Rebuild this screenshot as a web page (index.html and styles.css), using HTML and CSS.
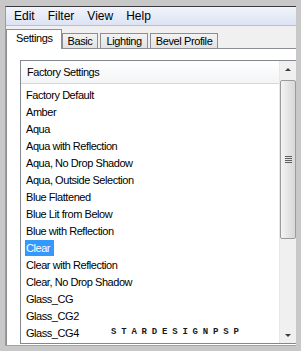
FILE: index.html
```html
<!DOCTYPE html>
<html lang="en">

<head>
    <title>Preset Settings</title>
    <link rel="stylesheet" href="styles.css">
</head>

<body>
    <div class="window">
        <div class="menubar">
            <span class="menu-item">Edit</span>
            <span class="menu-item">Filter</span>
            <span class="menu-item">View</span>
            <span class="menu-item">Help</span>
        </div>

        <div class="tabs">
            <div class="tab tab-active">Settings</div>
            <div class="tab">Basic</div>
            <div class="tab">Lighting</div>
            <div class="tab">Bevel Profile</div>
        </div>

        <div class="panel">
            <div class="listbox">
                <div class="list">
                    <div class="list-header">Factory Settings</div>
                    <ul class="items">
                        <li><span>Factory Default</span></li>
                        <li><span>Amber</span></li>
                        <li><span>Aqua</span></li>
                        <li><span>Aqua with Reflection</span></li>
                        <li><span>Aqua, No Drop Shadow</span></li>
                        <li><span>Aqua, Outside Selection</span></li>
                        <li><span>Blue Flattened</span></li>
                        <li><span>Blue Lit from Below</span></li>
                        <li><span>Blue with Reflection</span></li>
                        <li class="selected"><span>Clear</span></li>
                        <li><span>Clear with Reflection</span></li>
                        <li><span>Clear, No Drop Shadow</span></li>
                        <li><span>Glass_CG</span></li>
                        <li><span>Glass_CG2</span></li>
                        <li><span>Glass_CG4</span></li>
                    </ul>
                </div>
                <div class="scrollbar">
                    <div class="arrow arrow-up"></div>
                    <div class="track">
                        <div class="thumb"><div class="grip"></div></div>
                    </div>
                    <div class="arrow arrow-down"></div>
                </div>
            </div>
        </div>

        <!-- watermark over the list -->
        <div class="watermark">STARDESIGNPSP</div>
    </div>
</body>

</html>
```

FILE: styles.css
```css
body {
    margin: 0;
    background-color: #c8c8c8;
    font-family: "Liberation Sans", Arial, sans-serif;
    color: #000;
}

.window {
    position: relative;
    margin: 6px 0 0 5px;
    width: 290px;
    height: 338px;
    border-top: 1px solid #3a3a3a;
    border-left: 1px solid #9c9c9c;
    border-bottom: 1px solid #a4a4a4;
    background-color: #f0f0f0;
    overflow: hidden;
}

.menubar {
    display: flex;
    height: 18px;
    padding-left: 1px;
    background: linear-gradient(#f1f4fb, #dde3f3);
    border-bottom: 1px solid #b9c0d2;
    font-size: 12px;
    line-height: 18px;
}

.menu-item {
    padding: 0 7px 0 7px;
}

.menu-item + .menu-item {
    margin-left: -1px;
}

.tabs {
    display: flex;
    align-items: flex-end;
    height: 22px;
    font-size: 11px;
    letter-spacing: -0.4px;
}

.tab {
    height: 14px;
    line-height: 14px;
    padding: 0 5px;
    margin-right: 2px;
    border: 1px solid #8c8e94;
    border-bottom: none;
    background: linear-gradient(#f3f3f3, #e2e2e2);
}

.tab-active {
    position: relative;
    height: 19px;
    line-height: 17px;
    padding: 0 8px 0 9px;
    margin-bottom: -1px;
    margin-right: 0;
    background: #fff;
    z-index: 1;
}

.panel {
    height: 295px;
    border-top: 1px solid #8c8e94;
    border-left: 1px solid #8c8e94;
    background-color: #fff;
    padding: 11px 0 0 13px;
}

.listbox {
    display: flex;
    width: 276px;
    height: 282px;
    border: 1px solid #828790;
}

.list {
    flex: 1;
    font-size: 11px;
    letter-spacing: -0.45px;
}

.list-header {
    height: 22px;
    line-height: 22px;
    padding-left: 6px;
    background: linear-gradient(#ffffff, #f3f4f6);
    border-bottom: 1px solid #d8d8d8;
}

.items {
    list-style: none;
    margin: 0;
    padding: 3px 0 0 4px;
}

.items li {
    height: 17px;
    line-height: 17px;
}

.items li span {
    display: inline-block;
    height: 16px;
    line-height: 16px;
    padding: 0 1px;
}

.items .selected span {
    background-color: #3399ff;
    color: #fff;
    padding-right: 4px;
}

.scrollbar {
    display: flex;
    flex-direction: column;
    width: 17px;
    background-color: #f0f0f0;
    border-left: 1px solid #e8e8e8;
}

.arrow {
    height: 17px;
    position: relative;
}

.arrow::after {
    content: "";
    position: absolute;
    left: 5px;
    width: 0;
    height: 0;
    border-left: 3px solid transparent;
    border-right: 3px solid transparent;
}

.arrow-up::after {
    top: 7px;
    border-bottom: 3px solid #3c3c3c;
}

.arrow-down::after {
    top: 8px;
    border-top: 3px solid #3c3c3c;
}

.track {
    flex: 1;
    padding-top: 2px;
}

.thumb {
    display: flex;
    align-items: center;
    justify-content: center;
    height: 157px;
    margin: 0 1px 0 0;
    border: 1px solid #9b9b9b;
    border-radius: 2px;
    background: linear-gradient(90deg, #f4f4f4, #e2e2e2 60%, #d8d8d8);
}

.grip {
    width: 7px;
    height: 7px;
    background: repeating-linear-gradient(#5e5e5e 0 1px, transparent 1px 2px);
}

.watermark {
    position: absolute;
    left: 105px;
    top: 320px;
    font-family: "Liberation Mono", monospace;
    font-size: 9px;
    font-weight: bold;
    letter-spacing: 4.8px;
    color: #1a1a1a;
}
```
